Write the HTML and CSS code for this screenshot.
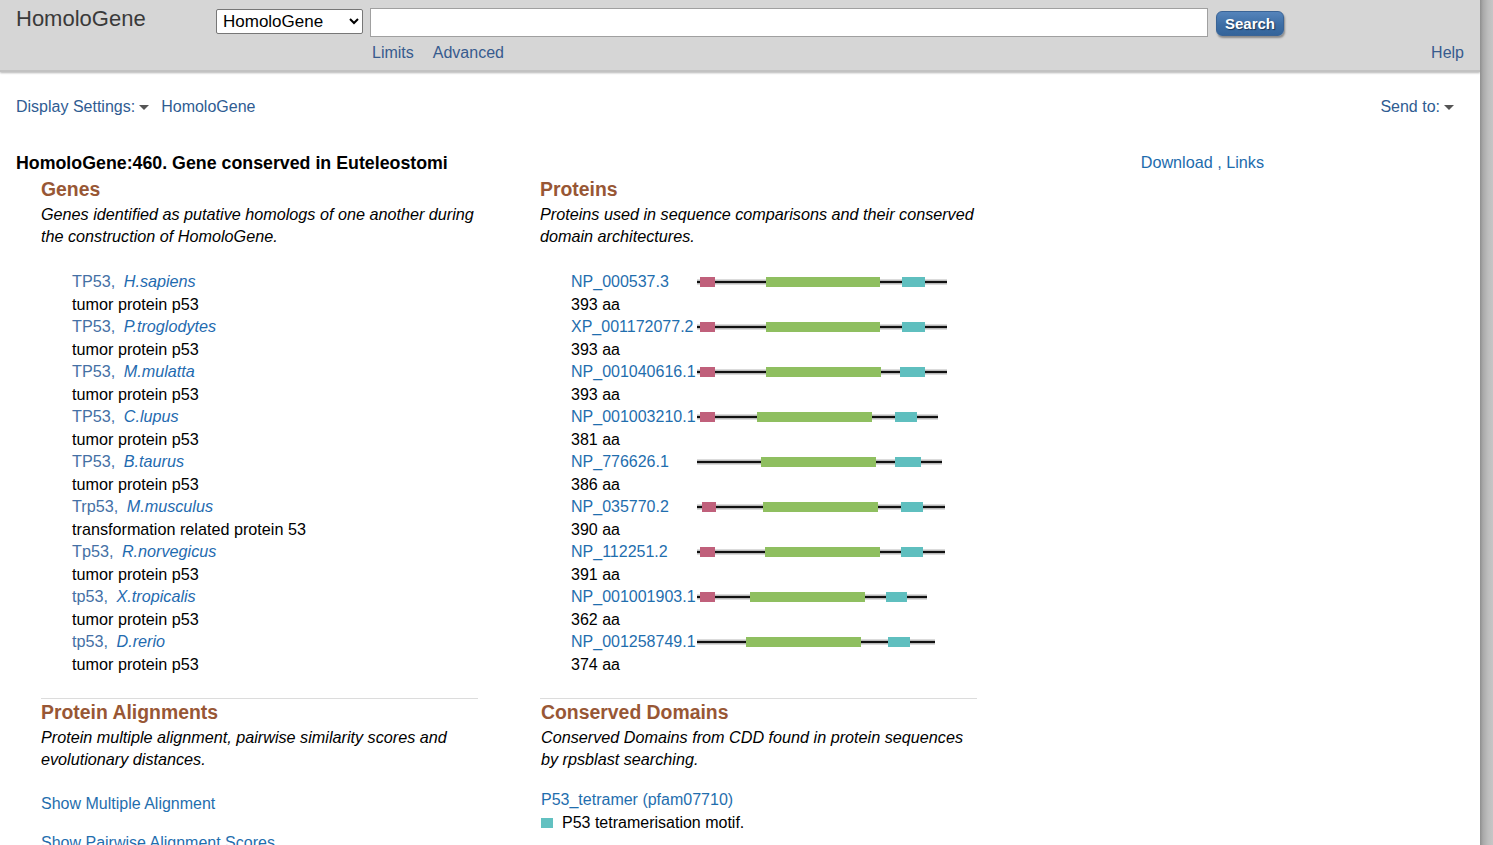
FILE: index.html
```html
<!DOCTYPE html>
<html>
<head>
<meta charset="utf-8">
<title>HomoloGene</title>
<link rel="stylesheet" href="styles.css">
</head>
<body>
<div class="page">
  <header class="topbar">
    <div class="brand">HomoloGene</div>
    <div class="searcharea">
      <div class="searchrow">
        <select class="db"><option>HomoloGene</option></select>
        <input class="term" type="text">
        <button class="searchbtn">Search</button>
      </div>
      <div class="sublinks">
        <div class="left"><a>Limits</a><a>Advanced</a></div>
        <a class="help">Help</a>
      </div>
    </div>
  </header>

  <div class="displaybar">
    <div class="dleft"><a class="dd">Display Settings:<span class="caret"></span></a><a class="crumb">HomoloGene</a></div>
    <a class="dd">Send to:<span class="caret"></span></a>
  </div>

  <main class="content">
    <div class="titlerow">
      <h1>HomoloGene:460. Gene conserved in Euteleostomi</h1>
      <div class="dl"><a>Download</a> , <a>Links</a></div>
    </div>

    <div class="sections">
      <section class="sec">
        <h2>Genes</h2>
        <p class="desc">Genes identified as putative homologs of one another during the construction of HomoloGene.</p>
        <ul class="list">
          <li><a class="sym">TP53,</a> <a class="sp">H.sapiens</a></li><li>tumor protein p53</li>
          <li><a class="sym">TP53,</a> <a class="sp">P.troglodytes</a></li><li>tumor protein p53</li>
          <li><a class="sym">TP53,</a> <a class="sp">M.mulatta</a></li><li>tumor protein p53</li>
          <li><a class="sym">TP53,</a> <a class="sp">C.lupus</a></li><li>tumor protein p53</li>
          <li><a class="sym">TP53,</a> <a class="sp">B.taurus</a></li><li>tumor protein p53</li>
          <li><a class="sym">Trp53,</a> <a class="sp">M.musculus</a></li><li>transformation related protein 53</li>
          <li><a class="sym">Tp53,</a> <a class="sp">R.norvegicus</a></li><li>tumor protein p53</li>
          <li><a class="sym">tp53,</a> <a class="sp">X.tropicalis</a></li><li>tumor protein p53</li>
          <li><a class="sym">tp53,</a> <a class="sp">D.rerio</a></li><li>tumor protein p53</li>
        </ul>
      </section>

      <section class="sec">
        <h2>Proteins</h2>
        <p class="desc">Proteins used in sequence comparisons and their conserved domain architectures.</p>
        <div class="plist">
          <div class="prow"><a class="acc">NP_000537.3</a>
            <svg class="arch" width="260" height="12" viewBox="0 0 260 12"><line x1="0" y1="6" x2="250" y2="6" class="halo"/><line x1="0" y1="6" x2="250" y2="6" class="core"/><rect x="3" y="1" width="15" height="10" class="d1"/><rect x="69" y="1" width="114" height="10" class="d2"/><rect x="205" y="1" width="23" height="10" class="d3"/></svg></div>
          <div class="aa">393 aa</div>
          <div class="prow"><a class="acc">XP_001172077.2</a>
            <svg class="arch" width="260" height="12" viewBox="0 0 260 12"><line x1="0" y1="6" x2="250" y2="6" class="halo"/><line x1="0" y1="6" x2="250" y2="6" class="core"/><rect x="3" y="1" width="15" height="10" class="d1"/><rect x="69" y="1" width="114" height="10" class="d2"/><rect x="205" y="1" width="23" height="10" class="d3"/></svg></div>
          <div class="aa">393 aa</div>
          <div class="prow"><a class="acc">NP_001040616.1</a>
            <svg class="arch" width="260" height="12" viewBox="0 0 260 12"><line x1="0" y1="6" x2="250" y2="6" class="halo"/><line x1="0" y1="6" x2="250" y2="6" class="core"/><rect x="3" y="1" width="15" height="10" class="d1"/><rect x="69" y="1" width="115" height="10" class="d2"/><rect x="203" y="1" width="25" height="10" class="d3"/></svg></div>
          <div class="aa">393 aa</div>
          <div class="prow"><a class="acc">NP_001003210.1</a>
            <svg class="arch" width="260" height="12" viewBox="0 0 260 12"><line x1="0" y1="6" x2="241" y2="6" class="halo"/><line x1="0" y1="6" x2="241" y2="6" class="core"/><rect x="3" y="1" width="15" height="10" class="d1"/><rect x="60" y="1" width="115" height="10" class="d2"/><rect x="198" y="1" width="22" height="10" class="d3"/></svg></div>
          <div class="aa">381 aa</div>
          <div class="prow"><a class="acc">NP_776626.1</a>
            <svg class="arch" width="260" height="12" viewBox="0 0 260 12"><line x1="0" y1="6" x2="245" y2="6" class="halo"/><line x1="0" y1="6" x2="245" y2="6" class="core"/><rect x="64" y="1" width="115" height="10" class="d2"/><rect x="198" y="1" width="26" height="10" class="d3"/></svg></div>
          <div class="aa">386 aa</div>
          <div class="prow"><a class="acc">NP_035770.2</a>
            <svg class="arch" width="260" height="12" viewBox="0 0 260 12"><line x1="0" y1="6" x2="248" y2="6" class="halo"/><line x1="0" y1="6" x2="248" y2="6" class="core"/><rect x="5" y="1" width="14" height="10" class="d1"/><rect x="66" y="1" width="115" height="10" class="d2"/><rect x="204" y="1" width="22" height="10" class="d3"/></svg></div>
          <div class="aa">390 aa</div>
          <div class="prow"><a class="acc">NP_112251.2</a>
            <svg class="arch" width="260" height="12" viewBox="0 0 260 12"><line x1="0" y1="6" x2="248" y2="6" class="halo"/><line x1="0" y1="6" x2="248" y2="6" class="core"/><rect x="3" y="1" width="15" height="10" class="d1"/><rect x="68" y="1" width="115" height="10" class="d2"/><rect x="204" y="1" width="22" height="10" class="d3"/></svg></div>
          <div class="aa">391 aa</div>
          <div class="prow"><a class="acc">NP_001001903.1</a>
            <svg class="arch" width="260" height="12" viewBox="0 0 260 12"><line x1="0" y1="6" x2="230" y2="6" class="halo"/><line x1="0" y1="6" x2="230" y2="6" class="core"/><rect x="3" y="1" width="15" height="10" class="d1"/><rect x="53" y="1" width="115" height="10" class="d2"/><rect x="189" y="1" width="21" height="10" class="d3"/></svg></div>
          <div class="aa">362 aa</div>
          <div class="prow"><a class="acc">NP_001258749.1</a>
            <svg class="arch" width="260" height="12" viewBox="0 0 260 12"><line x1="0" y1="6" x2="238" y2="6" class="halo"/><line x1="0" y1="6" x2="238" y2="6" class="core"/><rect x="49" y="1" width="115" height="10" class="d2"/><rect x="191" y="1" width="22" height="10" class="d3"/></svg></div>
          <div class="aa">374 aa</div>
        </div>
      </section>

      <section class="sec ruled">
        <h2>Protein Alignments</h2>
        <p class="desc">Protein multiple alignment, pairwise similarity scores and evolutionary distances.</p>
        <div class="links">
          <a>Show Multiple Alignment</a>
          <a>Show Pairwise Alignment Scores</a>
        </div>
      </section>

      <section class="sec ruled shifted">
        <h2>Conserved Domains</h2>
        <p class="desc">Conserved Domains from CDD found in protein sequences by rpsblast searching.</p>
        <div class="cdd">
          <a>P53_tetramer (pfam07710)</a>
          <div class="motif"><span class="swatch"></span>P53 tetramerisation motif.</div>
        </div>
      </section>
    </div>
  </main>
</div>
<div class="edge"></div>
</body>
</html>
```

FILE: styles.css
```css
html, body {
  margin: 0;
  padding: 0;
  height: 100%;
  overflow: hidden;
}
body {
  display: flex;
  font-family: "Liberation Sans", Arial, sans-serif;
  font-size: 16px;
  color: #000;
  background: #fff;
}
a { text-decoration: none; cursor: pointer; }

.page {
  width: 1480px;
  flex: none;
  background: #fff;
}
.edge {
  flex: 1;
  background: linear-gradient(to right, #8e8e8e 0px, #a9a9a9 3px, #bdbdbd 8px, #c6c6c6 13px);
}

/* header */
.topbar {
  display: flex;
  background: #d6d6d6;
  height: 72px;
  box-sizing: border-box;
  border-bottom: 2px solid #c2c2c2;
  box-shadow: 0 1px 2px #b5b5b5;
  padding: 0 16px;
}
.brand {
  width: 200px;
  font-size: 22px;
  color: #3a3a3a;
  padding-top: 6px;
  line-height: 26px;
}
.searcharea {
  flex: 1;
  display: flex;
  flex-direction: column;
}
.searchrow {
  display: flex;
  align-items: flex-start;
  padding-top: 8px;
}
.db {
  width: 147px;
  height: 25px;
  margin-top: 1px;
  font-family: "Liberation Sans", Arial, sans-serif;
  font-size: 17px;
  border: 1px solid #777;
  border-radius: 2px;
  background: #fff;
  color: #000;
  padding: 0 2px;
}
.term {
  width: 838px;
  height: 29px;
  box-sizing: border-box;
  margin-left: 7px;
  border: 1px solid #a0a0a0;
  background: #fff;
}
.searchbtn {
  margin-left: 8px;
  margin-top: 3px;
  width: 68px;
  height: 25px;
  border: 1px solid #3a6496;
  border-radius: 6px;
  background: linear-gradient(#5584bb, #3d6ea5 55%, #34649a);
  color: #fff;
  font-family: "Liberation Sans", Arial, sans-serif;
  font-weight: bold;
  font-size: 15px;
  text-shadow: 1px 1px 1px #1b3556;
  box-shadow: 1px 2px 2px #8a8a8a;
  padding: 0;
}
.sublinks {
  display: flex;
  justify-content: space-between;
  margin-top: 6px;
  line-height: 20px;
}
.sublinks .left { padding-left: 156px; display: flex; gap: 19px; }
.sublinks a { color: #375b8e; }

/* display bar */
.displaybar {
  display: flex;
  justify-content: space-between;
  padding: 25px 26px 0 16px;
  line-height: 20px;
}
.dleft { display: flex; gap: 12px; }
.dd, .crumb { color: #2f5c92; }
.caret {
  display: inline-block;
  width: 0; height: 0;
  border-left: 5px solid transparent;
  border-right: 5px solid transparent;
  border-top: 5px solid #555;
  margin-left: 4px;
  vertical-align: 2px;
}

/* content */
.content {
  width: 1248px;
  padding-left: 16px;
}
.titlerow {
  display: flex;
  justify-content: space-between;
  margin-top: 36px;
  line-height: 20px;
}
h1 {
  margin: 0;
  font-size: 17.8px;
  font-weight: bold;
}
.dl { color: #1d6cad; font-size: 16.2px; line-height: 19px; }
.dl a { color: #1d6cad; }

.sections {
  display: grid;
  grid-template-columns: 437px 437px;
  column-gap: 62px;
  padding-left: 25px;
  margin-top: 4px;
}
.sec h2 {
  margin: 0;
  font-size: 19.4px;
  line-height: 24px;
  color: #985735;
}
.shifted { padding-left: 1px; }
.desc {
  margin: 2px 0 0;
  font-style: italic;
  font-size: 16.2px;
  line-height: 22px;
}
.ruled {
  margin-top: 22px;
  border-top: 1px solid #dcdcdc;
  padding-top: 1px;
}

.list {
  list-style: none;
  margin: 23px 0 0;
  padding: 0 0 0 31px;
  line-height: 22.5px;
  font-size: 16.2px;
}
.sym { color: #4570a5; }
.sp { color: #1f6bb0; font-style: italic; margin-left: 4px; }

.plist {
  margin-top: 24px;
  padding-left: 31px;
  line-height: 22.5px;
}
.prow {
  display: grid;
  grid-template-columns: 126px 260px;
  align-items: center;
}
.acc { color: #1f6eae; white-space: nowrap; }
.arch { display: block; }
.halo { stroke: #b8b8b8; stroke-width: 5; }
.core { stroke: #111; stroke-width: 2; }
.d1 { fill: #c0607b; }
.d2 { fill: #8fbf60; }
.d3 { fill: #5fbfbf; }

.links {
  display: flex;
  flex-direction: column;
  gap: 17px;
  margin-top: 23px;
  line-height: 22px;
}
.links a { color: #1f6eae; }
.cdd {
  margin-top: 19px;
  line-height: 22.5px;
}
.cdd a { color: #1f6eae; }
.motif { display: flex; align-items: center; }
.swatch {
  width: 12px; height: 10px;
  background: #62c1c1;
  margin-right: 9px;
}
```
